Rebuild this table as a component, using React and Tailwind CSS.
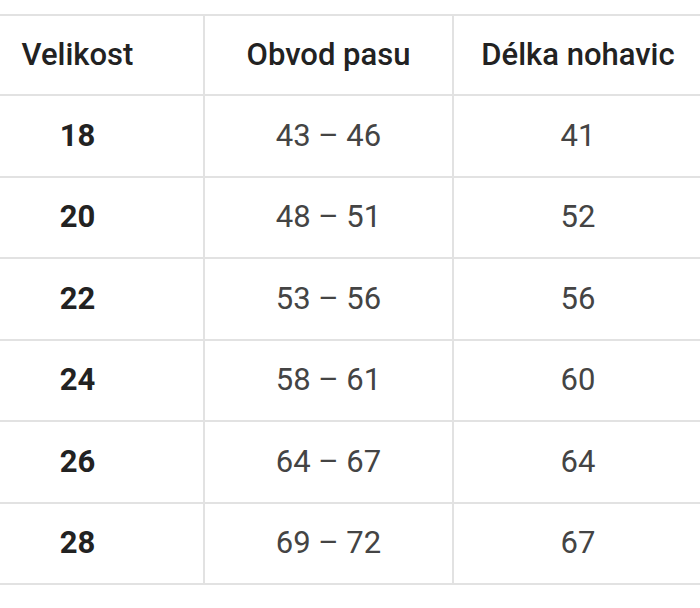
export default function App() {
  const rows = [
    ["18", "43 – 46", "41"],
    ["20", "48 – 51", "52"],
    ["22", "53 – 56", "56"],
    ["24", "58 – 61", "60"],
    ["26", "64 – 67", "64"],
    ["28", "69 – 72", "67"],
  ];
  return (
    <div className="w-[700px] h-[608px] bg-white overflow-hidden pt-[14px]" style={{ fontFamily: "Roboto, 'Liberation Sans', sans-serif" }}>
      <div className="ml-[-48px] w-[750px] border-t-2 border-[#e2e2e2]">
        <div className="flex h-[80px] border-b-2 border-[#e2e2e2] text-[31px] font-medium text-[#222]">
          <div className="w-[253px] flex items-center justify-center border-r-2 border-[#e2e2e2]">Velikost</div>
          <div className="w-[249px] flex items-center justify-center border-r-2 border-[#e2e2e2]">Obvod pasu</div>
          <div className="w-[248px] flex items-center justify-center">Délka nohavic</div>
        </div>
        {rows.map((r) => (
          <div key={r[0]} className="flex h-[81.5px] border-b-2 border-[#e2e2e2] text-[31px]">
            <div className="w-[253px] flex items-center justify-center border-r-2 border-[#e2e2e2] font-bold text-[#222]">{r[0]}</div>
            <div className="w-[249px] flex items-center justify-center border-r-2 border-[#e2e2e2] text-[#444]">{r[1]}</div>
            <div className="w-[248px] flex items-center justify-center text-[#444]">{r[2]}</div>
          </div>
        ))}
      </div>
    </div>
  );
}
